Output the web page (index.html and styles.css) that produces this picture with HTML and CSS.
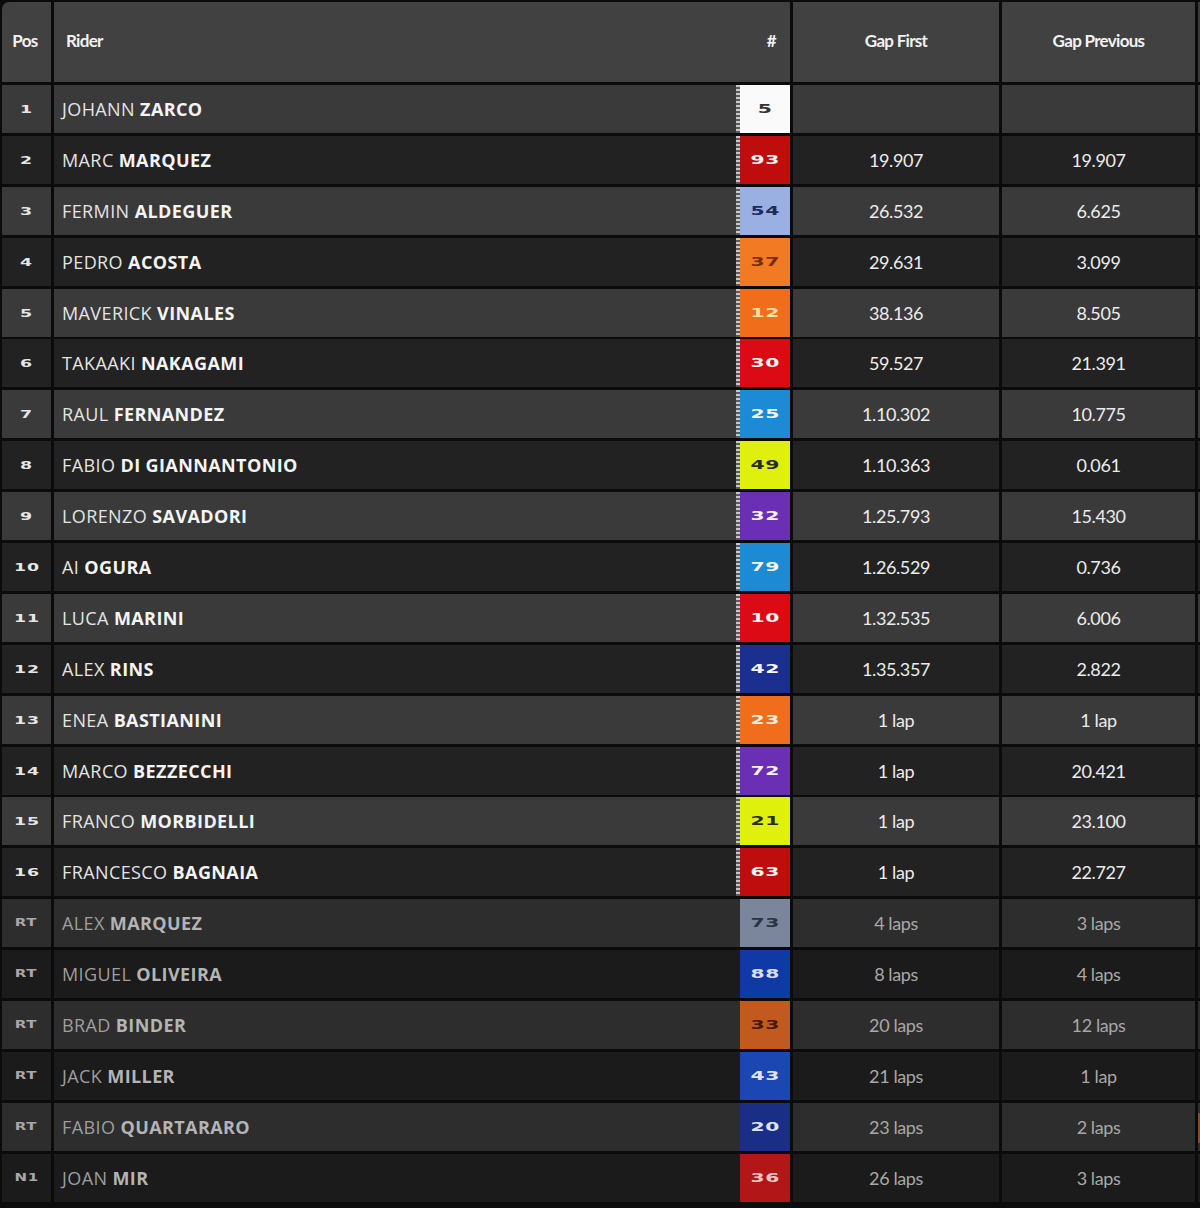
FILE: index.html
```html
<!DOCTYPE html>
<html lang="en">
<head>
<meta charset="utf-8">
<title>Race Results</title>
<link rel="stylesheet" href="styles.css">
</head>
<body>
<div class="table">
  <div class="row head">
    <div class="cell pos-h first">Pos</div>
    <div class="cell rider-h"><span>Rider</span><span class="hash">#</span></div>
    <div class="cell gap-h">Gap First</div>
    <div class="cell gap-h">Gap Previous</div>
    <div class="cell edge"></div>
  </div>

  <div class="row odd"><div class="cell pos"><span>1</span></div><div class="cell rider"><span class="name">JOHANN <b>ZARCO</b></span><span class="num n-white"><span>5</span></span></div><div class="cell gap"></div><div class="cell gap"></div><div class="cell edge"></div></div>
  <div class="row even"><div class="cell pos"><span>2</span></div><div class="cell rider"><span class="name">MARC <b>MARQUEZ</b></span><span class="num n-dred"><span>93</span></span></div><div class="cell gap">19.907</div><div class="cell gap">19.907</div><div class="cell edge"></div></div>
  <div class="row odd"><div class="cell pos"><span>3</span></div><div class="cell rider"><span class="name">FERMIN <b>ALDEGUER</b></span><span class="num n-lblue"><span>54</span></span></div><div class="cell gap">26.532</div><div class="cell gap">6.625</div><div class="cell edge"></div></div>
  <div class="row even"><div class="cell pos"><span>4</span></div><div class="cell rider"><span class="name">PEDRO <b>ACOSTA</b></span><span class="num n-ktm"><span>37</span></span></div><div class="cell gap">29.631</div><div class="cell gap">3.099</div><div class="cell edge"></div></div>
  <div class="row odd"><div class="cell pos"><span>5</span></div><div class="cell rider"><span class="name">MAVERICK <b>VINALES</b></span><span class="num n-ktm2"><span>12</span></span></div><div class="cell gap">38.136</div><div class="cell gap">8.505</div><div class="cell edge"></div></div>
  <div class="row even"><div class="cell pos"><span>6</span></div><div class="cell rider"><span class="name">TAKAAKI <b>NAKAGAMI</b></span><span class="num n-red"><span>30</span></span></div><div class="cell gap">59.527</div><div class="cell gap">21.391</div><div class="cell edge"></div></div>
  <div class="row odd"><div class="cell pos"><span>7</span></div><div class="cell rider"><span class="name">RAUL <b>FERNANDEZ</b></span><span class="num n-blue"><span>25</span></span></div><div class="cell gap">1.10.302</div><div class="cell gap">10.775</div><div class="cell edge"></div></div>
  <div class="row even"><div class="cell pos"><span>8</span></div><div class="cell rider"><span class="name">FABIO <b>DI GIANNANTONIO</b></span><span class="num n-yellow"><span>49</span></span></div><div class="cell gap">1.10.363</div><div class="cell gap">0.061</div><div class="cell edge"></div></div>
  <div class="row odd"><div class="cell pos"><span>9</span></div><div class="cell rider"><span class="name">LORENZO <b>SAVADORI</b></span><span class="num n-purple"><span>32</span></span></div><div class="cell gap">1.25.793</div><div class="cell gap">15.430</div><div class="cell edge"></div></div>
  <div class="row even"><div class="cell pos"><span>10</span></div><div class="cell rider"><span class="name">AI <b>OGURA</b></span><span class="num n-blue"><span>79</span></span></div><div class="cell gap">1.26.529</div><div class="cell gap">0.736</div><div class="cell edge"></div></div>
  <div class="row odd"><div class="cell pos"><span>11</span></div><div class="cell rider"><span class="name">LUCA <b>MARINI</b></span><span class="num n-red"><span>10</span></span></div><div class="cell gap">1.32.535</div><div class="cell gap">6.006</div><div class="cell edge"></div></div>
  <div class="row even"><div class="cell pos"><span>12</span></div><div class="cell rider"><span class="name">ALEX <b>RINS</b></span><span class="num n-navy"><span>42</span></span></div><div class="cell gap">1.35.357</div><div class="cell gap">2.822</div><div class="cell edge"></div></div>
  <div class="row odd"><div class="cell pos"><span>13</span></div><div class="cell rider"><span class="name">ENEA <b>BASTIANINI</b></span><span class="num n-ktm2w"><span>23</span></span></div><div class="cell gap">1 lap</div><div class="cell gap">1 lap</div><div class="cell edge"></div></div>
  <div class="row even"><div class="cell pos"><span>14</span></div><div class="cell rider"><span class="name">MARCO <b>BEZZECCHI</b></span><span class="num n-purple"><span>72</span></span></div><div class="cell gap">1 lap</div><div class="cell gap">20.421</div><div class="cell edge"></div></div>
  <div class="row odd"><div class="cell pos"><span>15</span></div><div class="cell rider"><span class="name">FRANCO <b>MORBIDELLI</b></span><span class="num n-yellow"><span>21</span></span></div><div class="cell gap">1 lap</div><div class="cell gap">23.100</div><div class="cell edge"></div></div>
  <div class="row even"><div class="cell pos"><span>16</span></div><div class="cell rider"><span class="name">FRANCESCO <b>BAGNAIA</b></span><span class="num n-dred"><span>63</span></span></div><div class="cell gap">1 lap</div><div class="cell gap">22.727</div><div class="cell edge"></div></div>

  <div class="row odd out"><div class="cell pos"><span>RT</span></div><div class="cell rider"><span class="name">ALEX <b>MARQUEZ</b></span><span class="num n-grey nostripe"><span>73</span></span></div><div class="cell gap">4 laps</div><div class="cell gap">3 laps</div><div class="cell edge"></div></div>
  <div class="row even out"><div class="cell pos"><span>RT</span></div><div class="cell rider"><span class="name">MIGUEL <b>OLIVEIRA</b></span><span class="num n-rblue nostripe"><span>88</span></span></div><div class="cell gap">8 laps</div><div class="cell gap">4 laps</div><div class="cell edge"></div></div>
  <div class="row odd out"><div class="cell pos"><span>RT</span></div><div class="cell rider"><span class="name">BRAD <b>BINDER</b></span><span class="num n-bktm nostripe"><span>33</span></span></div><div class="cell gap">20 laps</div><div class="cell gap">12 laps</div><div class="cell edge"></div></div>
  <div class="row even out"><div class="cell pos"><span>RT</span></div><div class="cell rider"><span class="name">JACK <b>MILLER</b></span><span class="num n-rblue2 nostripe"><span>43</span></span></div><div class="cell gap">21 laps</div><div class="cell gap">1 lap</div><div class="cell edge"></div></div>
  <div class="row odd out"><div class="cell pos"><span>RT</span></div><div class="cell rider"><span class="name">FABIO <b>QUARTARARO</b></span><span class="num n-navy2 nostripe"><span>20</span></span></div><div class="cell gap">23 laps</div><div class="cell gap">2 laps</div><div class="cell edge orange"></div></div>
  <div class="row even out"><div class="cell pos"><span>N1</span></div><div class="cell rider"><span class="name">JOAN <b>MIR</b></span><span class="num n-hred nostripe"><span>36</span></span></div><div class="cell gap">26 laps</div><div class="cell gap">3 laps</div><div class="cell edge"></div></div>
</div>
</body>
</html>
```

FILE: styles.css
```css
* { box-sizing: border-box; }
html, body { margin: 0; padding: 0; background: #0c0c0c; }
body { width: 1200px; height: 1208px; overflow: hidden; }

.table {
  display: flex;
  flex-direction: column;
  gap: 2.9px;
  padding: 2px 0 0 2px;
  background: #0b0b0b;
}

.row {
  display: grid;
  grid-template-columns: 49px 736px 206px 193px 2px;
  column-gap: 3px;
  height: 48px;
}
.row.head { height: 80px; margin-bottom: 0.1px; }

.cell {
  display: flex;
  align-items: center;
  color: #ececec;
  font-family: Lato, "Open Sans", sans-serif;
}

.head .cell {
  background: #414141;
  font-weight: 700;
  font-size: 17px;
  letter-spacing: -0.7px;
  color: #f2f2f2;
  padding-bottom: 4px;
}
.head .first { border-top-left-radius: 7px; }
.pos-h { justify-content: center; padding-right: 3px; }
.rider-h { justify-content: space-between; padding: 0 14px 0 12px; }
.gap-h { justify-content: center; }
.head .edge { background: #3a3a3a; }

.odd .cell { background: #3a3a3a; }
.even .cell { background: #222222; }
.odd.out .cell { background: #2d2d2d; }
.even.out .cell { background: #1b1b1b; }
.edge.orange { background: linear-gradient(to bottom, #2d2d2d 0 10px, #8a4a24 10px 40px, #2d2d2d 40px) !important; }

.pos {
  justify-content: center;
  font-family: "DejaVu Sans", sans-serif;
  font-weight: 700;
  font-size: 12px;
  letter-spacing: 0.6px;
  color: #e6e6e6;
}
.pos span { display: inline-block; transform: scale(1.45, 0.9); }
.out .pos { color: #a8a8a8; }
.out .pos span { transform: scale(1.25, 0.85); }

.rider { justify-content: space-between; padding-left: 8px; }
.name {
  font-family: "Open Sans", sans-serif;
  font-size: 18px;
  font-weight: 500;
  color: #e4e4e4;
  letter-spacing: 0.4px;
}
.name b { font-weight: 700; color: #f4f4f4; }
.out .name { color: #9e9e9e; }
.out .name b { color: #b4b4b4; }

.num {
  position: relative;
  width: 50px;
  height: 100%;
  display: flex;
  align-items: center;
  justify-content: center;
  font-family: "DejaVu Sans", sans-serif;
  font-weight: 700;
  font-size: 14px;
  letter-spacing: 0.4px;
}
.num span { display: inline-block; transform: scale(1.45, 0.85); }
.num::before {
  content: "";
  position: absolute;
  left: -4px; top: 0; bottom: 0;
  width: 4px;
  background: repeating-linear-gradient(to bottom, #c8c8c8 0 2px, #5a5a5a 2px 4px);
}
.num.nostripe::before { display: none; }

.n-white  { background: #fafafa; color: #333; }
.n-dred   { background: #bf0d0d; color: #f5f5f5; }
.n-lblue  { background: #9bb0e2; color: #1c2c60; }
.n-ktm    { background: #f27a22; color: #7a2a05; }
.n-ktm2   { background: #f06d1c; color: #ffe2a8; }
.n-ktm2w  { background: #f06d1c; color: #fff0e0; }
.n-red    { background: #dc0a14; color: #f5f5f5; }
.n-blue   { background: #1d8ad6; color: #f5f5f5; }
.n-yellow { background: #dff00c; color: #2a2a2a; }
.n-purple { background: #6a2fb4; color: #f5f5f5; }
.n-navy   { background: #1b2f8e; color: #f5f5f5; }
.n-grey   { background: #7b869c; color: #2a3244; }
.n-rblue  { background: #0f3aa6; color: #d8def0; }
.n-bktm   { background: #c25a1f; color: #4a1804; }
.n-rblue2 { background: #1a47b2; color: #e0e6f4; }
.n-navy2  { background: #1a2e88; color: #dfe3f2; }
.n-hred   { background: #b31616; color: #f1c5c5; }

.gap {
  justify-content: center;
  font-size: 18px;
  font-weight: 400;
  letter-spacing: -0.4px;
  color: #ececec;
}
.out .gap { color: #a8a8a8; }
```
